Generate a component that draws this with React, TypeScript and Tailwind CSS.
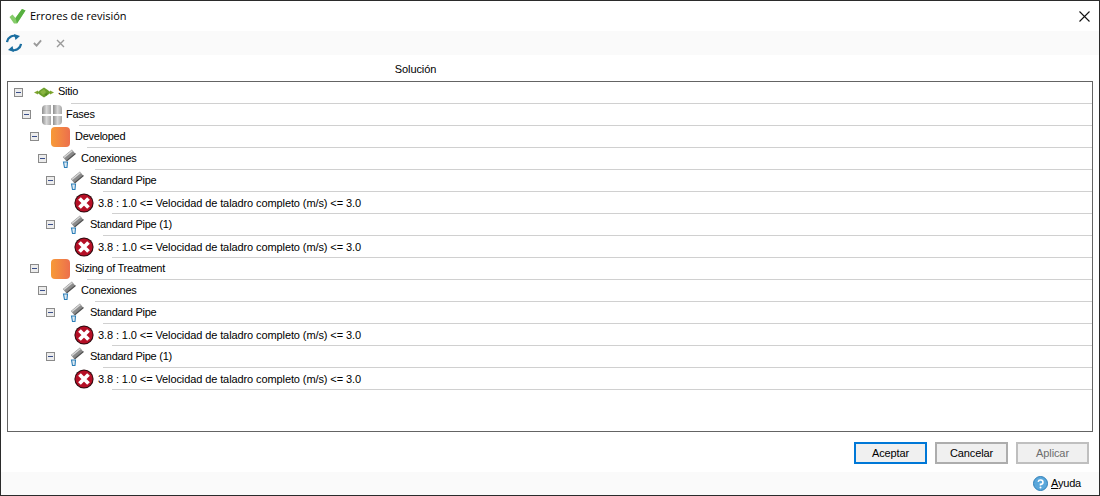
import type { ReactNode } from "react";

function SiteIcon() {
  return (
    <svg width="20" height="11" viewBox="0 0 20 11">
      <path d="M0 5.5 L4 3.5 L4 7.5 Z M20 5.5 L16 3.5 L16 7.5 Z" fill="#7fa52f" />
      <path d="M3 5.5 L7 2.5 L10 0.5 L13 2.5 L17 5.5 L13 8.5 L10 10.5 L7 8.5 Z" fill="#6b9f2b" />
      <path d="M6 5 L10 2 L12 5 L9 8 Z" fill="#8ab541" />
      <path d="M11 7.5 L14 5.5 L12 9 Z" fill="#4b7e1d" />
    </svg>
  );
}

function PhaseIcon() {
  return (
    <svg width="20" height="20" viewBox="0 0 20 20">
      <defs>
        <linearGradient id="ph" x1="0" y1="0" x2="1" y2="0">
          <stop offset="0" stopColor="#8f8f8f" />
          <stop offset="0.5" stopColor="#d8d8d8" />
          <stop offset="1" stopColor="#a8a8a8" />
        </linearGradient>
      </defs>
      <path d="M4 0 H9 V9 H0 V4 Q0 0 4 0 Z" fill="url(#ph)" />
      <path d="M11 0 H16 Q20 0 20 4 V9 H11 Z" fill="url(#ph)" />
      <path d="M0 11 H9 V20 H4 Q0 20 0 16 Z" fill="url(#ph)" />
      <path d="M11 11 H20 V16 Q20 20 16 20 H11 Z" fill="url(#ph)" />
    </svg>
  );
}

function StageIcon() {
  return <div className="w-[19px] h-[20px] rounded-[4px] bg-gradient-to-r from-[#f79a35] to-[#ec6f4c]" />;
}

function PipeIcon() {
  return (
    <svg width="16" height="20" viewBox="0 0 16 20">
      <path d="M3.5 10 L12.5 2.5" fill="none" stroke="#8a8a8a" strokeWidth="5" />
      <path d="M3 8.5 L11.5 1.5" fill="none" stroke="#d6d6d6" strokeWidth="1.6" />
      <path d="M5.5 12 L14.5 4.5" fill="none" stroke="#4d4d4d" strokeWidth="1.2" />
      <path d="M2.5 13 H6.5 L6 18.5 H3.5 Z" fill="#dfeaf2" stroke="#2c7fb8" strokeWidth="1.1" />
    </svg>
  );
}

function ErrorIcon() {
  return (
    <svg width="20" height="20" viewBox="0 0 20 20">
      <circle cx="10" cy="10" r="9.6" fill="#2a0a0e" />
      <circle cx="10" cy="10" r="8.6" fill="#b50f26" />
      <path d="M5.5 5.5 L14.5 14.5 M14.5 5.5 L5.5 14.5" stroke="#fff" strokeWidth="3.8" />
    </svg>
  );
}

function Expander() {
  return (
    <div className="w-[9px] h-[9px] bg-[#ececec] border border-[#8a8a8a] flex items-center justify-center shrink-0">
      <div className="w-[5px] h-px bg-[#3a4f8a]" />
    </div>
  );
}

type Row = {
  label: string;
  icon: ReactNode;
  rowClass: string;
  lineClass: string;
  iconClass: string;
  textClass: string;
  leaf?: boolean;
};

const nodeText = "tracking-[-0.25px]";

const site = { rowClass: "pl-[6px]", iconClass: "ml-[11px] w-[24px]", lineClass: "ml-[63px]", textClass: "mb-[2px] tracking-[-0.25px]" };
const fases = { rowClass: "pl-[14px]", iconClass: "ml-[11px] w-[24px]", lineClass: "ml-[71px]", textClass: nodeText };
const stage = { rowClass: "pl-[22px]", iconClass: "ml-[12px] w-[24px]", lineClass: "ml-[79px]", textClass: nodeText };
const conn = { rowClass: "pl-[30px]", iconClass: "ml-[14px] w-[20px]", lineClass: "ml-[87px]", textClass: nodeText };
const pipe = { rowClass: "pl-[38px]", iconClass: "ml-[14px] w-[21px]", lineClass: "ml-[95px]", textClass: nodeText };
const err = { rowClass: "pl-[66px]", iconClass: "w-[24px]", lineClass: "ml-[104px]", textClass: "mt-[1px] tracking-[-0.1px]", leaf: true };

const message = "3.8 : 1.0 <= Velocidad de taladro completo (m/s) <= 3.0";

const group = (name: string): Row[] => [
  { label: name, icon: <StageIcon />, ...stage },
  { label: "Conexiones", icon: <PipeIcon />, ...conn },
  { label: "Standard Pipe", icon: <PipeIcon />, ...pipe },
  { label: message, icon: <ErrorIcon />, ...err },
  { label: "Standard Pipe (1)", icon: <PipeIcon />, ...pipe },
  { label: message, icon: <ErrorIcon />, ...err },
];

const rows: Row[] = [
  { label: "Sitio", icon: <SiteIcon />, ...site },
  { label: "Fases", icon: <PhaseIcon />, ...fases },
  ...group("Developed"),
  ...group("Sizing of Treatment"),
];

function TreeRow({ row }: { row: Row }) {
  return (
    <div>
      <div className={`h-[21px] flex items-center ${row.rowClass}`}>
        {!row.leaf && <Expander />}
        <div className={`flex items-center shrink-0 ${row.iconClass}`}>{row.icon}</div>
        <span className={`text-[11px] text-black whitespace-nowrap ${row.textClass}`}>{row.label}</span>
      </div>
      <div className={`h-px bg-[#d0d0d0] ${row.lineClass}`} />
    </div>
  );
}

function DialogButton({ label, className }: { label: string; className: string }) {
  return (
    <button className={`w-[73px] h-[22px] border-2 bg-[#f0f0f0] text-[11px] tracking-[-0.1px] flex items-center justify-center ${className}`}>
      {label}
    </button>
  );
}

export default function App() {
  return (
    <div
      className="w-[1100px] h-[496px] bg-white border border-[#2b2b2b] flex flex-col overflow-hidden"
      style={{ fontFamily: '"Liberation Sans", Arial, sans-serif' }}
    >
      {/* Title bar */}
      <div className="h-[30px] flex items-center pl-2 pr-[9px] shrink-0">
        <svg width="17" height="17" viewBox="0 0 17 17">
          <path d="M0.5 9 L3.5 6.5 L6.5 10 L13 1 L16.5 2.5 L8 15.5 L5 15.5 Z" fill="#86cc6a" />
          <path d="M6.5 10 L13 1 L16.5 2.5 L8 15.5 Z" fill="#57b040" />
        </svg>
        <span className="ml-[4px] text-[11px] text-black" style={{ fontFamily: '"Open Sans", sans-serif' }}>
          Errores de revisión
        </span>
        <svg className="ml-auto" width="11" height="11" viewBox="0 0 11 11">
          <path d="M0.5 0.5 L10.5 10.5 M10.5 0.5 L0.5 10.5" stroke="#111" strokeWidth="1.1" />
        </svg>
      </div>

      {/* Toolbar */}
      <div className="h-[24px] bg-[#fafafa] flex items-center pl-[5px] shrink-0">
        <svg width="16" height="18" viewBox="0 0 16 18">
          <path d="M1 8 A7 7 0 0 1 11 2.5" fill="none" stroke="#1b6ea0" strokeWidth="2.2" />
          <path d="M8 0 L14 2 L9.5 6 Z" fill="#1b6ea0" />
          <path d="M15 10 A7 7 0 0 1 5 15.5" fill="none" stroke="#1b6ea0" strokeWidth="2.2" />
          <path d="M8 18 L2 16 L6.5 12 Z" fill="#1b6ea0" />
        </svg>
        <svg className="ml-[11px]" width="9" height="8" viewBox="0 0 10 8">
          <path d="M1 4 L4 7 L9 1" fill="none" stroke="#9a9a9a" strokeWidth="2" />
        </svg>
        <svg className="ml-[14px]" width="9" height="9" viewBox="0 0 9 9">
          <path d="M1 1 L8 8 M8 1 L1 8" stroke="#9a9a9a" strokeWidth="1.4" />
        </svg>
      </div>

      {/* Column header */}
      <div className="h-[26px] shrink-0 flex items-center">
        <div className="w-[829px] text-center text-[11px] text-black tracking-[-0.1px] pt-[3px]">Solución</div>
      </div>

      {/* Tree */}
      <div className="mx-[6px] h-[351px] border border-[#646464] shrink-0 overflow-hidden">
        {rows.map((row, i) => (
          <TreeRow key={i} row={row} />
        ))}
      </div>

      {/* Buttons */}
      <div className="h-[40px] shrink-0 flex justify-end items-start gap-2 pt-[10px] pr-[10px]">
        <DialogButton label="Aceptar" className="border-[#0078d7] text-black" />
        <DialogButton label="Cancelar" className="border-[#adadad] text-black" />
        <DialogButton label="Aplicar" className="border-[#bfbfbf] text-[#6d6d6d]" />
      </div>

      {/* Footer */}
      <div className="flex-1 bg-[#fafafa] flex items-center justify-end pr-[18px]">
        <svg width="15" height="15" viewBox="0 0 15 15">
          <circle cx="7.5" cy="7.5" r="7" fill="#5aa7db" stroke="#2f7fb8" />
          <path d="M5.2 5.8 A2.4 2.2 0 1 1 7.5 8.4 V9.4" fill="none" stroke="#fff" strokeWidth="1.6" />
          <circle cx="7.5" cy="11.6" r="1" fill="#fff" />
        </svg>
        <span className="ml-[3px] text-[11px] tracking-[-0.2px] text-black">
          <span className="underline">A</span>yuda
        </span>
      </div>
    </div>
  );
}
